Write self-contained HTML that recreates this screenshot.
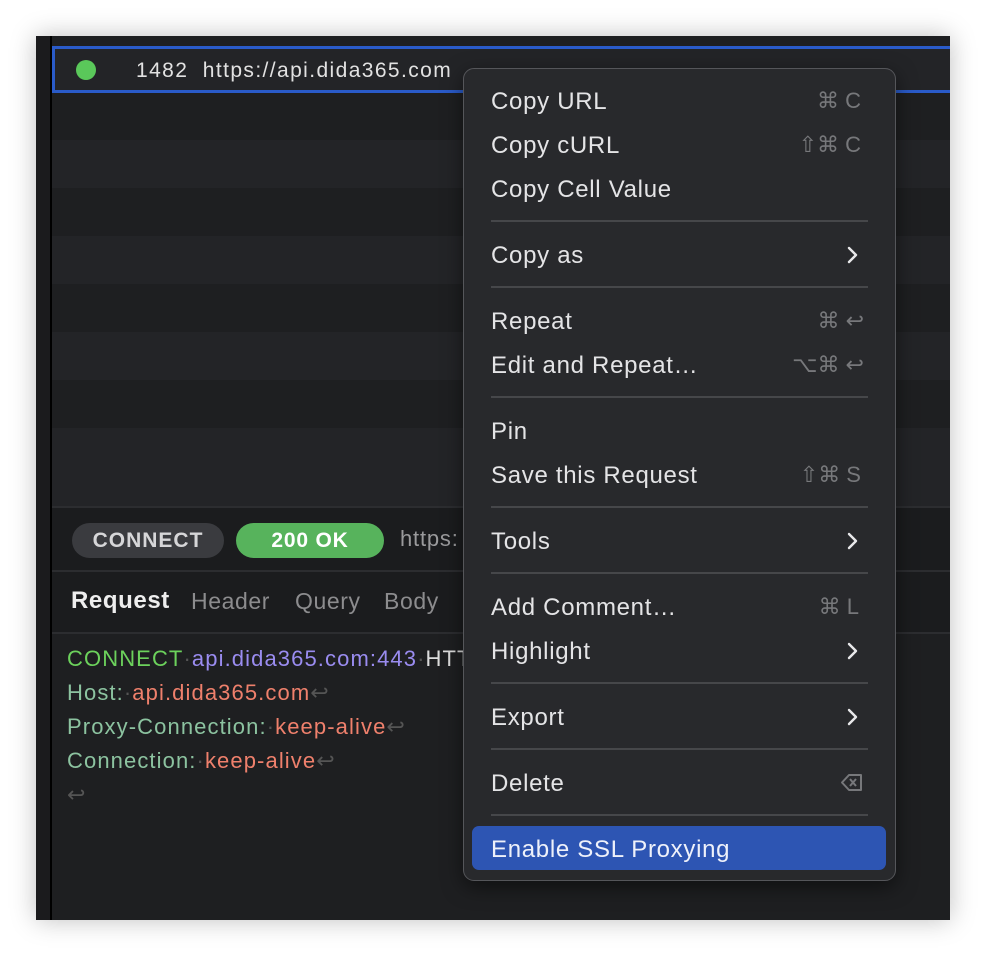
<!DOCTYPE html>
<html><head><meta charset="utf-8"><style>
*{margin:0;padding:0;box-sizing:border-box}
body{width:986px;height:956px;background:#fff;position:relative;overflow:hidden;font-family:"Liberation Sans",sans-serif}
.win{position:absolute;left:36px;top:36px;width:914px;height:884px;background:#1e1f21;box-shadow:0 0 24px rgba(0,0,0,.25);overflow:hidden}
.a{position:absolute}
.row{position:absolute;left:16px;right:0;height:48px}
.mi{position:absolute;left:491px;font-size:24px;letter-spacing:0.7px;color:#e4e4e6;line-height:30px;white-space:nowrap}
.sc{position:absolute;right:0;font-size:22px;color:#77787b;line-height:28px}
.sep{position:absolute;left:491px;width:377px;height:2px;background:#46474a}
.tab{position:absolute;top:552px;font-size:23px;color:#8c8c8e;letter-spacing:0.6px}
</style></head><body>
<div class="win">
 <div class="a" style="left:0;top:0;width:14px;height:884px;background:#1b1b1d"></div>
 <div class="a" style="left:14px;top:0;width:2px;height:884px;background:#000"></div>
 <div class="row" style="top:56px;background:#1e1f21;height:48px"></div>
 <div class="row" style="top:104px;background:#232427"></div>
 <div class="row" style="top:152px;background:#1e1f21"></div>
 <div class="row" style="top:200px;background:#232427"></div>
 <div class="row" style="top:248px;background:#1e1f21"></div>
 <div class="row" style="top:296px;background:#232427"></div>
 <div class="row" style="top:344px;background:#1e1f21"></div>
 <div class="row" style="top:392px;background:#232427;height:78px"></div>
 <div class="a" style="left:16px;top:10px;width:920px;height:47px;background:#232427;border:3px solid #2a5bc9;border-right:none"></div>
 <div class="a" style="left:40px;top:24px;width:20px;height:20px;border-radius:50%;background:#5ac85a"></div>
 <div class="a" style="left:100px;top:23px;font-size:21px;letter-spacing:1.4px;color:#e2e2e2;line-height:24px;white-space:nowrap">1482&nbsp;&nbsp;https://api.dida365.com</div>
 <div class="a" style="left:16px;top:470px;right:0;height:2px;background:#2c2d30"></div>
 <div class="a" style="left:16px;top:472px;right:0;height:62px;background:#1b1c1e"></div>
 <div class="a" style="left:36px;top:487px;width:152px;height:35px;border-radius:18px;background:#3a3b3f;color:#d6d6d8;font-weight:bold;font-size:21px;letter-spacing:1px;text-align:center;line-height:35px">CONNECT</div>
 <div class="a" style="left:200px;top:487px;width:148px;height:35px;border-radius:18px;background:#57b35c;color:#fff;font-weight:bold;font-size:21px;letter-spacing:0.8px;text-align:center;line-height:35px">200 OK</div>
 <div class="a" style="left:364px;top:490px;font-size:22px;letter-spacing:0.8px;color:#9a9a9c">https:</div>
 <div class="a" style="left:16px;top:534px;right:0;height:2px;background:#2c2d30"></div>
 <div class="a" style="left:16px;top:536px;right:0;height:60px;background:#1b1c1e"></div>
 <div class="a" style="left:35px;top:551px;font-size:24px;letter-spacing:0.6px;color:#eee;font-weight:bold">Request</div>
 <div class="tab" style="left:155px">Header</div>
 <div class="tab" style="left:259px">Query</div>
 <div class="tab" style="left:348px">Body</div>
 <div class="a" style="left:16px;top:596px;right:0;height:2px;background:#2c2d30"></div>
 <div class="a" style="left:31px;top:606px;font-size:22px;letter-spacing:1.1px;line-height:34px;white-space:pre"><span style="color:#6cd25c">CONNECT</span><span style="color:#555">·</span><span style="color:#9a8cf0">api.dida365.com:443</span><span style="color:#555">·</span><span style="color:#ddd">HTTP</span>
<span style="color:#8cc3a0">Host:</span><span style="color:#555">·</span><span style="color:#ef806c">api.dida365.com</span><span style="color:#555">↩</span>
<span style="color:#8cc3a0">Proxy-Connection:</span><span style="color:#555">·</span><span style="color:#ef806c">keep-alive</span><span style="color:#555">↩</span>
<span style="color:#8cc3a0">Connection:</span><span style="color:#555">·</span><span style="color:#ef806c">keep-alive</span><span style="color:#555">↩</span>
<span style="color:#555">↩</span></div>
</div>
<div class="a" style="left:463px;top:68px;width:433px;height:813px;background:#28292c;border:1.5px solid #55565a;border-radius:11px;box-shadow:0 6px 20px rgba(0,0,0,.5)"></div>
<div class="a" style="left:472px;top:826px;width:414px;height:44px;background:#2d55b3;border-radius:7px"></div>
<div style="position:absolute;left:0;top:0;width:986px">
 <div class="mi" style="top:87px">Copy URL</div><div class="sc" style="top:87px;right:125px">⌘ C</div>
 <div class="mi" style="top:131px">Copy cURL</div><div class="sc" style="top:131px;right:125px">⇧⌘ C</div>
 <div class="mi" style="top:175px">Copy Cell Value</div>
 <div class="sep" style="top:220px"></div>
 <div class="mi" style="top:241px">Copy as</div>
 <div class="sep" style="top:286px"></div>
 <div class="mi" style="top:307px">Repeat</div><div class="sc" style="top:307px;right:122px">⌘ ↩</div>
 <div class="mi" style="top:351px">Edit and Repeat…</div><div class="sc" style="top:351px;right:122px">⌥⌘ ↩</div>
 <div class="sep" style="top:396px"></div>
 <div class="mi" style="top:417px">Pin</div>
 <div class="mi" style="top:461px">Save this Request</div><div class="sc" style="top:461px;right:125px">⇧⌘ S</div>
 <div class="sep" style="top:506px"></div>
 <div class="mi" style="top:527px">Tools</div>
 <div class="sep" style="top:572px"></div>
 <div class="mi" style="top:593px">Add Comment…</div><div class="sc" style="top:593px;right:127px">⌘ L</div>
 <div class="mi" style="top:637px">Highlight</div>
 <div class="sep" style="top:682px"></div>
 <div class="mi" style="top:703px">Export</div>
 <div class="sep" style="top:748px"></div>
 <div class="mi" style="top:769px">Delete</div>
 <div class="sep" style="top:814px"></div>
 <div class="mi" style="top:835px;color:#eef1fa">Enable SSL Proxying</div>
</div>
<svg class="a" style="left:0;top:0" width="986" height="956">
 <g fill="none" stroke="#e8e8ea" stroke-width="2.4" stroke-linecap="round" stroke-linejoin="round">
  <path d="M849 248l7 7-7 7"/><path d="M849 534l7 7-7 7"/><path d="M849 644l7 7-7 7"/><path d="M849 710l7 7-7 7"/>
 </g>
 <g fill="none" stroke="#77787b" stroke-width="2" stroke-linejoin="round">
  <path d="M849 775h12v15h-12l-7-7.5z"/><path d="M850 779l6 7M856 779l-6 7"/>
 </g>
</svg>
</body></html>
